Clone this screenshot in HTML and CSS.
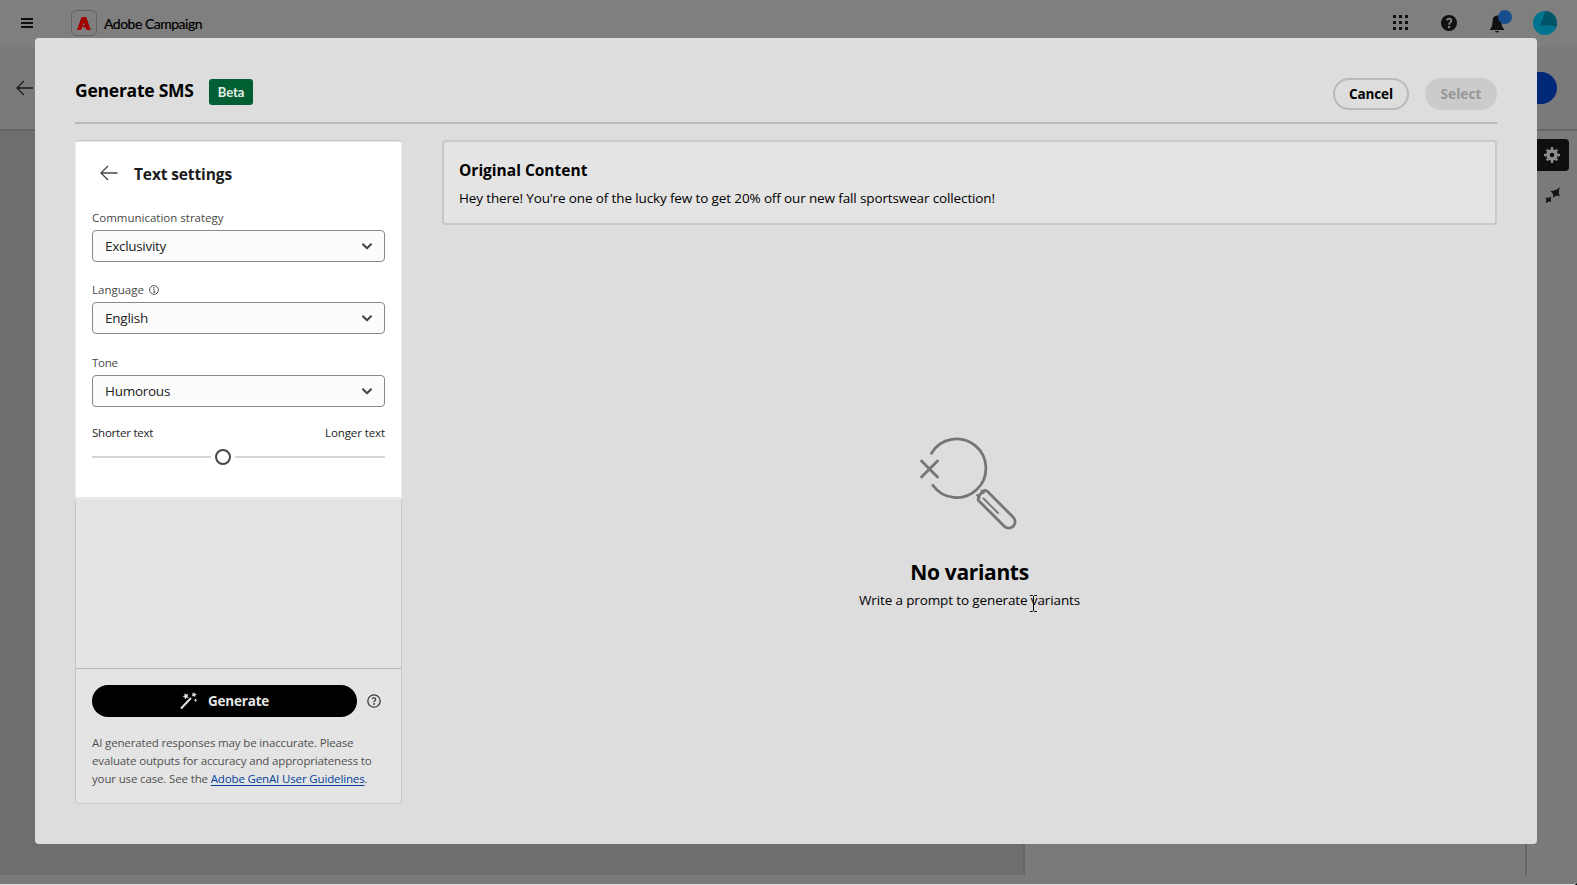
FILE: index.html
```
<!DOCTYPE html>
<html lang="en">
<head>
<meta charset="utf-8">
<title>Adobe Campaign</title>
<link rel="stylesheet" href="styles.css">
</head>
<body>
<div class="app">
  <header class="topbar">
    <svg class="menu" width="12" height="12" viewBox="0 0 12 12"><path d="M0 2h12M0 6h12M0 10h12" stroke="#101010" stroke-width="2"/></svg>
    <span class="logo"><svg width="14" height="13" viewBox="0 0 14 13"><path d="M4.500 0H9.200L13.800 13H9.500L8.600 10.500H5.800L6.700 8H7.800L7 5.600L4.100 13H0Z" fill="#a00000"/></svg></span>
    <span class="product">Adobe Campaign</span>
    <div class="tools">
      <svg width="16" height="16" viewBox="0 0 16 16" fill="#101010"><path d="M0 0h3v3H0zM6 0h3v3H6zM12 0h3v3h-3zM0 6h3v3H0zM6 6h3v3H6zM12 6h3v3h-3zM0 12h3v3H0zM6 12h3v3H6zM12 12h3v3h-3z"/></svg>
      <svg class="help" width="16" height="16" viewBox="0 0 16 16"><circle cx="8" cy="8" r="8" fill="#101010"/><path d="M5.7 5.2Q6.5 3.7 8 3.7Q10.4 3.7 10.4 5.8Q10.4 7 9 7.8Q8.2 8.3 8.2 9.7" fill="none" stroke="#7f7f7f" stroke-width="1.9"/><circle cx="8.1" cy="12" r="1.3" fill="#7f7f7f"/></svg>
      <svg class="bell" width="24" height="24" viewBox="0 0 24 24"><path d="M9 4.5C12.3 5 13.3 7 13.4 10C13.5 15 14.5 16.5 16 18V19H2V18C3.5 16.5 4.5 15 4.6 10C4.7 7 5.7 5 9 4.5ZM7 20H11Q10.6 21.5 9 21.5T7 20Z" fill="#101010"/><circle cx="17" cy="6" r="7" fill="#174d8d"/></svg>
      <svg class="avatar" width="24" height="24" viewBox="0 0 24 24"><circle cx="12" cy="12" r="12" fill="#00748f"/><path d="M12.5 0A12 12 0 0 1 22.8 17L20.5 14.5H7Z" fill="#005468"/></svg>
    </div>
  </header>
  <div class="subbar">
    <svg width="18" height="16" viewBox="0 0 18 16"><path d="M17 8H1M8 1L1 8l7 7" fill="none" stroke="#1a1a1a" stroke-width="1.3"/></svg>
    <span class="primary"></span>
  </div>
  <div class="workspace">
    <div class="canvas"></div>
    <div class="preview"></div>
    <div class="rail">
      <span class="rail-active"><svg width="16" height="16" viewBox="0 0 16 16"><circle cx="8" cy="8" r="4" fill="none" stroke="#8c8c8c" stroke-width="3.6"/><path d="M8 0v3M8 13v3M0 8h3M13 8h3M2.7 2.7l2 2M11.3 11.3l2 2M2.7 13.3l2-2M11.3 4.7l2-2" stroke="#8c8c8c" stroke-width="2.4"/></svg></span>
      <svg class="sparkles" width="16" height="17" viewBox="0 0 16 17" fill="#151515"><path d="M15 0Q12.900 4.500 14.800 9.600Q11.500 7.600 8 10.800Q9 6.800 5.200 4Q10.500 4.300 15 0Z"/><path d="M6.300 9.500Q5.300 12.200 6.200 14.800Q4 13.800 .6 16.200Q2.400 13.400 .6 10.400Q3.400 11.600 6.300 9.500Z"/></svg>
    </div>
  </div>
  <div class="app-foot"></div>
</div>

<main class="modal">
  <header class="modal-head">
    <h1 class="title">Generate SMS</h1>
    <span class="beta">Beta</span>
    <span class="btn cancel">Cancel</span>
    <span class="btn select-btn">Select</span>
  </header>
  <div class="modal-body">
    <aside class="panel">
      <section class="settings">
        <div class="settings-head">
          <svg width="18" height="16" viewBox="0 0 18 16"><path d="M17.5 8H1M8 1L1 8l7 7" fill="none" stroke="#464646" stroke-width="1.3"/></svg>
          <h2 class="settings-title">Text settings</h2>
        </div>
        <div class="label">Communication strategy</div>
        <div class="field"><span class="v-excl">Exclusivity</span><svg width="10" height="7" viewBox="0 0 10 7"><path d="M1 1.2L5 5.2L9 1.2" fill="none" stroke="#444" stroke-width="2" stroke-linecap="round" stroke-linejoin="round"/></svg></div>
        <div class="label">Language <svg class="info" width="10" height="10" viewBox="0 0 10 10"><circle cx="5" cy="5" r="4.4" fill="none" stroke="#555" stroke-width="1"/><path d="M4 4.5H5.2V7.3M4 7.3H6.3" fill="none" stroke="#555" stroke-width=".9"/><circle cx="5" cy="2.8" r=".7" fill="#555"/></svg></div>
        <div class="field"><span class="v-eng">English</span><svg width="10" height="7" viewBox="0 0 10 7"><path d="M1 1.2L5 5.2L9 1.2" fill="none" stroke="#444" stroke-width="2" stroke-linecap="round" stroke-linejoin="round"/></svg></div>
        <div class="label tone">Tone</div>
        <div class="field"><span class="v-hum">Humorous</span><svg width="10" height="7" viewBox="0 0 10 7"><path d="M1 1.2L5 5.2L9 1.2" fill="none" stroke="#444" stroke-width="2" stroke-linecap="round" stroke-linejoin="round"/></svg></div>
        <div class="range-labels"><span class="shorter">Shorter text</span><span class="longer">Longer text</span></div>
        <svg class="slider" width="293" height="30" viewBox="0 0 293 30"><path d="M0 15H119M143 15H293" stroke="#d4d4d4" stroke-width="2"/><circle cx="131" cy="15" r="7" fill="#fff" stroke="#464646" stroke-width="2"/></svg>
      </section>
      <div class="spacer"></div>
      <footer class="panel-foot">
        <div class="generate-row">
          <span class="generate">
            <svg width="18" height="18" viewBox="0 0 18 18"><path d="M1 16.5L11 6" stroke="#e2e2e2" stroke-width="2"/><path d="M4.5 1.2L6 2.5L8.3 2L7.5 4.3L8.8 6L6.4 5.8L5 7.6L4.6 5.2L2.5 4.2L4.5 3.4ZM14 0L14.8 1.8L17 2L15.2 3.2L15.2 5L13.6 4L11.8 4.6L12.6 2.8L11.8 1.2L13.5 1.5ZM15.5 6.8L16.9 8.3L15.5 9.8L14.1 8.3Z" fill="#e2e2e2"/></svg>
            <span>Generate</span>
          </span>
          <svg class="hint" width="14" height="14" viewBox="0 0 14 14"><circle cx="7" cy="7" r="6.2" fill="none" stroke="#3c3c3c" stroke-width="1.3"/><path d="M5.2 5Q5.7 3.9 7 3.9Q8.7 3.9 8.7 5.4Q8.7 6.2 7.7 6.8Q7 7.2 7 8.2" fill="none" stroke="#3c3c3c" stroke-width="1.3"/><circle cx="7" cy="10" r=".9" fill="#3c3c3c"/></svg>
        </div>
        <p class="legal">AI generated responses may be inaccurate. Please<br>evaluate outputs for accuracy and appropriateness to<br>your use case. See the <a class="link">Adobe GenAI User Guidelines</a>.</p>
      </footer>
    </aside>
    <section class="content">
      <article class="original">
        <h3 class="original-title">Original Content</h3>
        <p class="original-text">Hey there! You're one of the lucky few to get 20% off our new fall sportswear collection!</p>
      </article>
      <div class="empty">
        <svg class="no-result" width="98" height="94" viewBox="0 0 98 94" fill="none" stroke="#757575" stroke-width="2.8" stroke-linecap="round" stroke-linejoin="round"><path d="M12.5 16.2A29.3 29.3 0 1 1 13.8 48.3"/><path d="M2.5 24L18.5 40M18.5 24L2.5 40"/><path d="M57.5 57.500L61 61M62 53L65.5 56.500" stroke-width="2" stroke-linecap="butt"/><path d="M60 60.5Q59 59.5 60 58.5L64.500 54Q66.500 52.500 68.500 54.500L94 80A6 6 0 0 1 85.500 89.500L59.500 63.500Q58.500 62 60 60.500Z"/><path d="M64.500 61.500L79 76" stroke-width="1.800"/></svg>
        <h2 class="empty-title">No variants</h2>
        <p class="empty-text">Write a prompt to generate variants</p>
      </div>
    </section>
  </div>
  <svg class="cursor" width="9" height="17" viewBox="0 0 9 17"><path d="M1 .5H3.500L4.500 1.500L5.500 .5H8M1 16.500H3.500L4.500 15.500L5.500 16.500H8M4.500 1.500V15.500" fill="none" stroke="#000"/></svg>
</main>
</body>
</html>
```
FILE: styles.css
```
* { box-sizing: border-box; }
body {
  margin: 0;
  width: 1577px;
  height: 885px;
  overflow: hidden;
  background: #000;
  font-family: "Open Sans", "Noto Sans", sans-serif;
  color: #000;
}
h1, h2, h3, p { margin: 0; }
svg { display: block; flex: none; overflow: visible; }

.app { height: 885px; display: flex; flex-direction: column; background: #7a7a7a; border-bottom: 1px solid #ddd; border-bottom-right-radius: 4px; }
.topbar { height: 47px; padding: 0 20px 1px 21px; display: flex; align-items: center; background: #7f7f7f; }
.menu { margin-top: -1px; }
.logo { width: 26px; height: 26px; margin-left: 38px; border: 1px solid #626262; border-radius: 5px; display: flex; align-items: center; justify-content: center; }
.product { margin-left: 7px; font-family: Lato, sans-serif; font-size: 14px; line-height: 47px; letter-spacing: -0.5px; -webkit-text-stroke: 0.2px #000; }
.tools { margin-left: auto; display: flex; align-items: center; }
.help { margin-left: 32px; }
.bell { margin-left: 31px; }
.avatar { margin-left: 21px; }

.subbar { height: 84px; padding: 0 20px 0 16px; display: flex; align-items: center; justify-content: space-between; border-bottom: 2px solid #656565; }
.primary { width: 100px; height: 32px; border-radius: 16px; background: #002878; }
.workspace { flex: 1; display: flex; }
.canvas { width: 1025px; background: #6e6e6e; border-right: 2px solid #656565; }
.preview { width: 502px; border-right: 2px solid #656565; }
.rail { padding-top: 8px; }
.rail-active { width: 42px; height: 32px; padding-left: 8px; display: flex; align-items: center; justify-content: center; background: #0f0f0f; border-radius: 4px; }
.sparkles { margin: 16px 0 0 18px; }
.app-foot { height: 9px; }

.modal { position: absolute; left: 35px; top: 38px; width: 1502px; height: 806px; padding: 0 40px 40px; background: #ddd; border-radius: 4px; display: flex; flex-direction: column; }
.modal-head { height: 86px; padding-top: 40px; display: flex; align-items: flex-start; border-bottom: 2px solid #b9b9b9; }
.title { font-size: 17.5px; line-height: 32px; margin-top: -4px; letter-spacing: -0.24px; width: 134px; white-space: nowrap; }
.beta { height: 26px; width: 44px; margin-top: 1px; text-align: center; line-height: 27px; border-radius: 3px; background: #006034; color: #e4efe8; font-family: Lato, sans-serif; font-weight: 700; font-size: 13px; letter-spacing: -0.1px; }
.btn { height: 32px; border-radius: 16px; text-align: center; font-size: 13.5px; font-weight: 700; letter-spacing: -0.1px; }
.cancel { width: 76px; margin-left: auto; line-height: 29px; border: 2px solid #b9b9b9; }
.select-btn { width: 72px; margin-left: 16px; line-height: 33px; background: #cbcbcb; color: #969696; letter-spacing: 0.1px; }
.modal-body { flex: 1; margin-top: 16px; display: flex; gap: 40px; }

.panel { width: 327px; display: flex; flex-direction: column; border: 1px solid #c8c8c8; border-radius: 4px; background: #e4e4e4; }
.settings { margin-top: 1px; height: 355px; padding: 16px 16px 0; background: #fff; box-shadow: 0 1px 1px 1px #eaeaea; }
.settings-head { height: 32px; padding-left: 8px; display: flex; align-items: center; gap: 16px; }
.settings-head svg { margin-top: -2px; }
.settings-title { font-size: 15.5px; line-height: 32px; letter-spacing: -0.12px; color: #1c1c1c; }
.label { margin-top: 19px; line-height: 18px; font-size: 11.5px; color: #484848; display: flex; align-items: center; }
.tone { margin-top: 20px; letter-spacing: -0.3px; }
.info { margin-left: 5px; }
.field { margin-top: 3px; height: 32px; padding: 0 12px; display: flex; align-items: center; justify-content: space-between; border: 1px solid #888; border-radius: 4px; background: #fcfcfc; color: #222; font-size: 13.5px; line-height: 30px; }
.v-excl { letter-spacing: -0.3px; }
.v-eng { letter-spacing: -0.23px; padding-top: 1px; line-height: 31px; }
.v-hum { letter-spacing: -0.27px; }
.range-labels { margin-top: 17px; display: flex; justify-content: space-between; font-size: 11.5px; line-height: 18px; color: #1c1c1c; }
.shorter { letter-spacing: -0.23px; }
.longer { letter-spacing: -0.1px; }
.spacer { flex: 1; }
.panel-foot { height: 135px; padding: 16px 16px 0; border-top: 1px solid #b5b5b5; }
.generate-row { display: flex; align-items: center; }
.generate { width: 265px; height: 32px; padding-left: 88px; display: flex; align-items: center; gap: 10px; border-radius: 16px; background: #000; color: #e6e6e6; font-size: 13.5px; line-height: 32px; font-weight: 700; letter-spacing: -0.2px; }
.hint { margin-left: 10px; }
.legal { margin-top: 17px; font-size: 11.5px; line-height: 18px; letter-spacing: -0.145px; color: #505050; white-space: nowrap; }
.link { color: #003e9e; text-decoration: underline; text-underline-offset: 2px; }

.content { flex: 1; display: flex; flex-direction: column; }
.original { height: 85px; padding: 16px 15px 0; border: 2px solid #c8c8c8; border-radius: 4px; background: #e4e4e4; }
.original-title { font-size: 15.5px; line-height: 24px; }
.original-text { margin-top: 4px; font-size: 13.5px; line-height: 24px; letter-spacing: -0.13px; }
.empty { padding-top: 212px; display: flex; flex-direction: column; align-items: center; }
.no-result { margin-right: 4px; }
.empty-title { margin-top: 25px; font-size: 21px; line-height: 32px; letter-spacing: -0.33px; }
.empty-text { font-size: 13.5px; line-height: 24px; letter-spacing: -0.13px; }
.cursor { position: absolute; left: 994px; top: 557px; }
```
